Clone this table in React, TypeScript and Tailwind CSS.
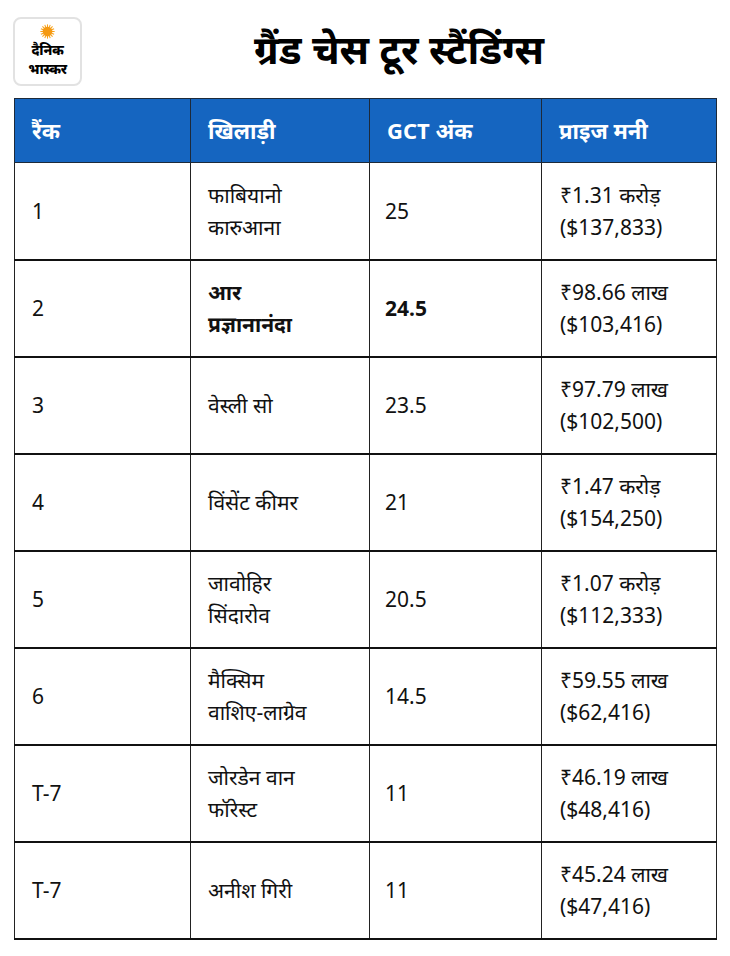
const rows = [
  { rank: "1", name: ["फाबियानो", "कारुआना"], pts: "25", money: ["₹1.31 करोड़", "($137,833)"] },
  { rank: "2", name: ["आर", "प्रज्ञानानंदा"], pts: "24.5", money: ["₹98.66 लाख", "($103,416)"], bold: true },
  { rank: "3", name: ["वेस्ली सो"], pts: "23.5", money: ["₹97.79 लाख", "($102,500)"] },
  { rank: "4", name: ["विंसेंट कीमर"], pts: "21", money: ["₹1.47 करोड़", "($154,250)"] },
  { rank: "5", name: ["जावोहिर", "सिंदारोव"], pts: "20.5", money: ["₹1.07 करोड़", "($112,333)"] },
  { rank: "6", name: ["मैक्सिम", "वाशिए-लाग्रेव"], pts: "14.5", money: ["₹59.55 लाख", "($62,416)"] },
  { rank: "T-7", name: ["जोरडेन वान", "फॉरेस्ट"], pts: "11", money: ["₹46.19 लाख", "($48,416)"] },
  { rank: "T-7", name: ["अनीश गिरी"], pts: "11", money: ["₹45.24 लाख", "($47,416)"] },
];

function Logo() {
  return (
    <div className="w-[69px] h-[69px] rounded-lg border-2 border-[#e2e2e2] bg-white flex flex-col items-center justify-center shrink-0">
      <svg width="15" height="15" viewBox="0 0 20 20">
        {Array.from({ length: 16 }).map((_, i) => {
          const a = (i * Math.PI * 2) / 16;
          return (
            <line
              key={i}
              x1={10 + Math.cos(a) * 6}
              y1={10 + Math.sin(a) * 6}
              x2={10 + Math.cos(a) * 9.5}
              y2={10 + Math.sin(a) * 9.5}
              stroke="#f7a21b"
              strokeWidth="1.4"
            />
          );
        })}
        <circle cx="10" cy="10" r="6.5" fill="#f59a12" />
      </svg>
      <div className="text-[14px] leading-[21px] font-extrabold text-black tracking-tight">दैनिक</div>
      <div className="text-[14px] leading-[21px] font-extrabold text-black tracking-tight -mt-[2px]">भास्कर</div>
    </div>
  );
}

export default function App() {
  return (
    <div className="w-[730px] h-[956px] bg-white text-[#111] font-['Noto_Sans','Noto_Sans_Devanagari',sans-serif]">
      <div className="flex items-center pl-[13px] pr-[14px] pt-[17px]">
        <Logo />
        <h1 className="flex-1 text-center text-[40px] font-bold text-black pb-[6px]">ग्रैंड चेस टूर स्टैंडिंग्स</h1>
      </div>
      <table className="ml-[14px] mt-[12px] w-[702px] border-collapse table-fixed text-[21px] leading-[32px]">
        <colgroup>
          <col className="w-[176px]" />
          <col className="w-[179px]" />
          <col className="w-[172px]" />
          <col className="w-[175px]" />
        </colgroup>
        <thead>
          <tr className="bg-[#1565c0] text-white h-[64px]">
            {["रैंक", "खिलाड़ी", "GCT अंक", "प्राइज मनी"].map((h) => (
              <th key={h} className="border border-[#1d2a3a] text-left text-[22px] font-bold px-[17px] align-middle pb-[2px]">
                {h}
              </th>
            ))}
          </tr>
        </thead>
        <tbody>
          {rows.map((r, i) => (
            <tr key={i} className="h-[97px] border-b-2 border-[#111]">
              <td className="border-x border-[#222] px-[17px] align-middle">{r.rank}</td>
              <td className={`border-x border-[#222] px-[17px] align-middle ${r.bold ? "font-bold" : ""}`}>
                {r.name.map((n) => (
                  <div key={n}>{n}</div>
                ))}
              </td>
              <td className={`border-x border-[#222] px-[15px] align-middle ${r.bold ? "font-bold" : ""}`}>{r.pts}</td>
              <td className="border-x border-[#222] px-[18px] align-middle">
                {r.money.map((m) => (
                  <div key={m}>{m}</div>
                ))}
              </td>
            </tr>
          ))}
        </tbody>
      </table>
    </div>
  );
}
